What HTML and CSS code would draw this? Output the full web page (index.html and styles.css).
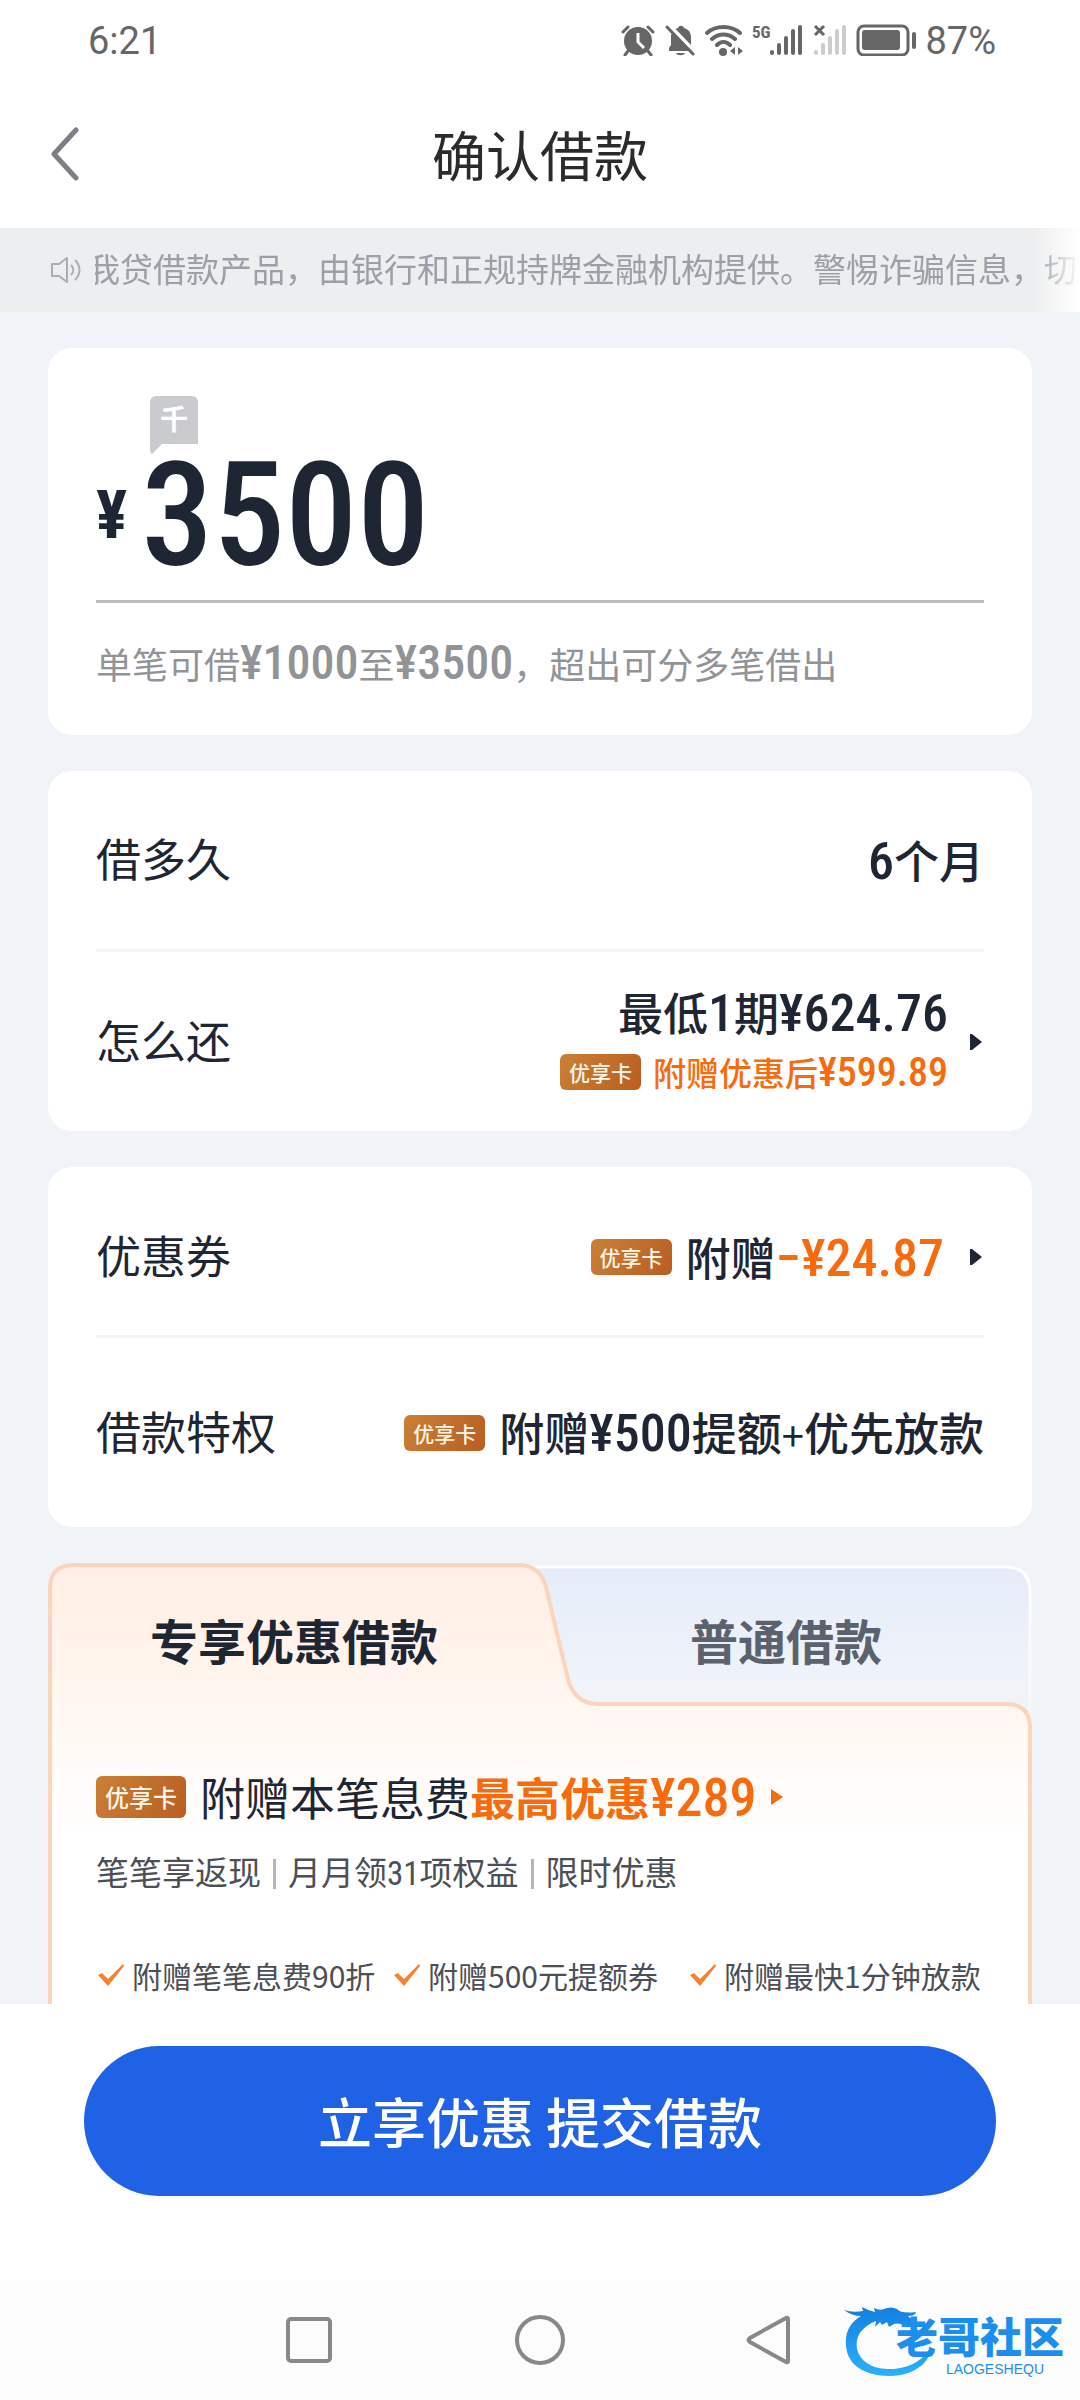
FILE: index.html
```html
<!DOCTYPE html>
<html lang="zh-CN">
<head>
<meta charset="utf-8">
<meta name="viewport" content="width=device-width, initial-scale=1">
<title>确认借款</title>
<link rel="stylesheet" href="styles.css">
</head>
<body>
<header>
  <div class="status">
    <span class="clock">6:21</span>
    <div class="status-icons">
      <svg width="34" height="32" viewBox="0 0 34 32" aria-hidden="true">
        <circle cx="17" cy="17" r="14" fill="#666"/>
        <path d="M2 8l5-5M32 8l-5-5M7 27l-3 4M27 27l3 4" stroke="#666" stroke-width="3" stroke-linecap="round"/>
        <path d="M17 9v9l6 6" fill="none" stroke="#fff" stroke-width="3"/>
      </svg>
      <svg width="32" height="32" viewBox="0 0 32 32" aria-hidden="true">
        <path d="M5 27v-3l2-3v-8c0-5 3-8 7-9 1-3 5-3 6 0 4 1 7 4 7 9v8l2 3v3z" fill="#666"/>
        <path d="M12 29h9c-1 3-8 3-9 0z" fill="#666"/>
        <path d="M5 1l26 27" stroke="#fff" stroke-width="4"/>
        <path d="M3 3l26 27" stroke="#666" stroke-width="3" stroke-linecap="round"/>
      </svg>
      <svg width="38" height="32" viewBox="0 0 38 32" aria-hidden="true">
        <path d="M2 9c9-8 24-8 33 0M7 15c7-6 16-6 23 0M12 21c4-4 9-4 13 0" fill="none" stroke="#666" stroke-width="4" stroke-linecap="round"/>
        <circle cx="18" cy="28" r="4" fill="#666"/>
        <path d="M30 23v8l-5-4zM33 23v8l5-4z" fill="#666"/>
      </svg>
      <div class="signal">
        <span class="net">5G</span>
        <svg width="34" height="32" viewBox="0 0 34 32" aria-hidden="true">
          <path d="M2 28v1M9 21v8M16 14v15M23 7v22M30 3v26" stroke="#666" stroke-width="4" stroke-linecap="round"/>
        </svg>
      </div>
      <svg width="34" height="32" viewBox="0 0 34 32" aria-hidden="true">
        <path d="M3 28v1M10 21v8M17 14v15M24 7v22M31 3v26" stroke="#ccc" stroke-width="4" stroke-linecap="round"/>
        <path d="M2 2l9 9M11 2l-9 9" stroke="#666" stroke-width="3"/>
      </svg>
      <svg class="battery" width="60" height="32" viewBox="0 0 60 32" aria-hidden="true">
        <rect x="2" y="2" width="50" height="29" rx="6" fill="none" stroke="#666" stroke-width="3"/>
        <rect x="6" y="6" width="38" height="20" rx="3" fill="#666"/>
        <rect x="56" y="8" width="4" height="17" rx="2" fill="#666"/>
      </svg>
      <span class="clock">87%</span>
    </div>
  </div>
  <div class="titlebar">
    <button class="back" aria-label="返回">
      <svg width="30" height="54" viewBox="0 0 30 54"><path d="M26 3L4 27l22 24" fill="none" stroke="#7d7e86" stroke-width="5" stroke-linecap="round" stroke-linejoin="round"/></svg>
    </button>
    <h1>确认借款</h1>
  </div>
  <div class="notice">
    <svg width="32" height="30" viewBox="0 0 32 30" aria-hidden="true"><path d="M2 9h7l8-6v24l-8-6H2zM21 10c3 3 3 7 0 10M25 5c6 6 6 14 0 20" fill="none" stroke="#a9adb3" stroke-width="2" stroke-linejoin="round"/></svg>
    <p>我贷借款产品，由银行和正规持牌金融机构提供。警惕诈骗信息，切</p>
  </div>
</header>

<main>
  <section class="card amount">
    <span class="unit">千</span>
    <div class="sum"><span class="yen">¥</span><span class="digits">3500</span></div>
    <p class="limits">单笔可借<b class="num">¥1000</b>至<b class="num">¥3500</b>，超出可分多笔借出</p>
  </section>

  <section class="card">
    <div class="row term">
      <span class="label">借多久</span>
      <span class="value"><span><span class="num">6</span>个月</span></span>
    </div>
    <div class="row plan">
      <span class="label">怎么还</span>
      <a class="value" href="#plan">
        <span class="stack">
          <span>最低<span class="num">1</span>期<span class="num">¥624.76</span></span>
          <span class="saving"><span class="tag">优享卡</span><span>附赠优惠后<span class="num">¥599.89</span></span></span>
        </span>
        <svg class="arrow" width="12" height="18" viewBox="0 0 12 18"><path d="M0 1h2l10 8-10 8H0z"/></svg>
      </a>
    </div>
  </section>

  <section class="card">
    <div class="row coupon">
      <span class="label">优惠券</span>
      <a class="value" href="#coupon">
        <span class="tag">优享卡</span>
        <span>附赠<span class="num hot">−¥24.87</span></span>
        <svg class="arrow" width="12" height="18" viewBox="0 0 12 18"><path d="M0 1h2l10 8-10 8H0z"/></svg>
      </a>
    </div>
    <div class="row perk">
      <span class="label">借款特权</span>
      <span class="value"><span class="tag">优享卡</span><span>附赠<span class="num">¥500</span>提额<small>+</small>优先放款</span></span>
    </div>
  </section>

  <section class="offer">
    <svg class="shape" viewBox="0 0 984 441" preserveAspectRatio="none" aria-hidden="true">
      <defs>
        <linearGradient id="warm" x1="0" y1="0" x2="0" y2="1">
          <stop offset="0" stop-color="#ffeee3"/><stop offset=".32" stop-color="#fff7f1"/><stop offset=".6" stop-color="#fff"/>
        </linearGradient>
        <linearGradient id="cool" x1="0" y1="0" x2="0" y2="1">
          <stop offset="0" stop-color="#e5ecf9"/><stop offset=".7" stop-color="#f0f4f9"/>
        </linearGradient>
        <linearGradient id="edge" x1="0" y1="0" x2="0" y2="1">
          <stop offset="0" stop-color="#fff"/><stop offset="1" stop-color="#fff" stop-opacity=".2"/>
        </linearGradient>
      </defs>
      <path d="M440 4H958Q982 4 982 30V170H440z" fill="url(#cool)" stroke="url(#edge)" stroke-width="3"/>
      <path d="M2 450V26Q2 2 26 2H470Q492 2 498 24L519 112Q525 141 550 141H958Q982 141 982 165V450z" fill="url(#warm)" stroke="#fad4bd" stroke-width="4"/>
    </svg>
    <div class="tabs" role="tablist">
      <button role="tab" aria-selected="true">专享优惠借款</button>
      <button role="tab" aria-selected="false">普通借款</button>
    </div>
    <div class="panel">
      <a class="headline" href="#benefits">
        <span class="tag large">优享卡</span>
        <span>附赠本笔息费<b class="hot">最高优惠<span class="num">¥289</span></b></span>
        <svg class="arrow hot" width="14" height="18" viewBox="0 0 14 18"><path d="M1 1l12 8-12 8z"/></svg>
      </a>
      <ul class="facts"><li>笔笔享返现</li><li>月月领31项权益</li><li>限时优惠</li></ul>
      <ul class="checks">
        <li><svg width="30" height="26" viewBox="0 0 30 26"><path d="M2 13l4-2 6 6L27 2l1 2-16 20z" fill="#f5812f"/></svg>附赠笔笔息费90折</li>
        <li><svg width="30" height="26" viewBox="0 0 30 26"><path d="M2 13l4-2 6 6L27 2l1 2-16 20z" fill="#f5812f"/></svg>附赠500元提额券</li>
        <li><svg width="30" height="26" viewBox="0 0 30 26"><path d="M2 13l4-2 6 6L27 2l1 2-16 20z" fill="#f5812f"/></svg>附赠最快1分钟放款</li>
      </ul>
    </div>
  </section>
</main>

<footer>
  <div class="action"><button class="submit">立享优惠 提交借款</button></div>
  <nav class="sysnav" aria-label="系统导航">
    <button aria-label="最近任务"><svg width="52" height="52" viewBox="0 0 52 52"><rect x="5" y="5" width="42" height="42" rx="3"/></svg></button>
    <button aria-label="主屏幕"><svg width="52" height="52" viewBox="0 0 52 52"><circle cx="26" cy="26" r="23"/></svg></button>
    <button aria-label="返回上一页"><svg width="52" height="52" viewBox="0 0 52 52"><path d="M41 4Q43 3 43 5V47Q43 49 41 48L5 28Q2 26 5 24z"/></svg></button>
    <div class="mark">
      <svg width="104" height="76" viewBox="0 0 104 76" aria-hidden="true">
        <defs><linearGradient id="sea" x1="0" y1="0" x2="0" y2="1"><stop offset="0" stop-color="#147fe0"/><stop offset="1" stop-color="#29b2fb"/></linearGradient></defs>
        <path d="M0 6Q9 9 19 7L18 3Q25 7 31 8L30 4Q36 7 40 5Q47 2 53 5Q57 10 72 8Q71 12 64 12L71 18Q67 22 60 18L64 23Q55 18 50 20L45 23L43 18L38 21L36 18L31 23L32 17C17 23 11 33 13 45C17 61 34 66 50 65C68 63 80 55 86 44C87 57 73 68 57 71C30 75 8 66 3 48C-1 31 5 19 17 12Q8 12 0 6z" fill="url(#sea)"/>
      </svg>
      <div class="mark-text"><span>老哥社区</span><small>LAOGESHEQU</small></div>
    </div>
  </nav>
</footer>
</body>
</html>
```
FILE: styles.css
```css
* { box-sizing: border-box; }
body {
  margin: 0;
  min-height: 100vh;
  display: flex;
  flex-direction: column;
  background: #f0f3f8;
  color: #1f2633;
  font-family: "Noto Sans CJK SC", sans-serif;
  font-size: 45px;
  line-height: 60px;
}
h1, p, ul { margin: 0; padding: 0; }
ul { list-style: none; }
a { color: inherit; text-decoration: none; }
button { border: 0; padding: 0; background: none; font: inherit; color: inherit; }
svg { display: block; flex: none; }

/* header */
header { background: #fff; }
.status {
  display: flex;
  justify-content: space-between;
  align-items: center;
  height: 80px;
  padding: 0 84px 0 88px;
  color: #666;
}
.clock { padding-top: 2px; font-family: Roboto, sans-serif; font-size: 38px; line-height: 40px; }
.status-icons { display: flex; align-items: center; gap: 9px; }
.signal { display: flex; align-items: flex-start; }
.net { font: 700 17px/16px "Roboto Condensed", "Liberation Sans", sans-serif; }
.titlebar {
  display: grid;
  grid-template-columns: 96px 1fr 96px;
  align-items: center;
  height: 148px;
}
.back { justify-self: end; padding-right: 16px; }
h1 { font-size: 54px; font-weight: 400; line-height: 72px; text-align: center; color: #2b2b2b; }
.notice {
  display: flex;
  align-items: center;
  gap: 13px;
  height: 84px;
  padding-left: 50px;
  background: linear-gradient(to right, #edeeef calc(100% - 48px), #fff);
  color: #9a9fa8;
  font-size: 33px;
}
.notice p {
  flex: 1;
  overflow: hidden;
  padding-bottom: 4px;
  white-space: nowrap;
  text-indent: -8px;
  mask-image: linear-gradient(to right, #000 calc(100% - 48px), transparent);
}

/* cards */
main {
  flex: 1;
  display: flex;
  flex-direction: column;
  gap: 36px;
  padding: 36px 48px 0;
}
.card { background: #fff; border-radius: 24px; padding: 0 48px; }
.num, .sum { font-family: "Roboto Condensed", "Noto Sans CJK SC", sans-serif; font-weight: 500; }
.num { font-size: 52px; line-height: 48px; }
.hot { color: #f76b0c; fill: #f76b0c; }
.amount { display: flex; flex-direction: column; padding: 48px 48px 42px; }
.unit {
  margin-left: 54px;
  width: 48px;
  height: 60px;
  background: #cacbce;
  color: #fff;
  font-size: 28px;
  font-weight: 700;
  line-height: 44px;
  text-align: center;
  border-radius: 6px;
  clip-path: polygon(0 0, 100% 0, 100% 80%, 25% 80%, 0 100%);
}
.sum {
  display: flex;
  align-items: center;
  gap: 14px;
  height: 144px;
  padding-bottom: 24px;
}
.yen { font-size: 66px; font-weight: 700; line-height: 66px; }
.digits { font-size: 144px; line-height: 120px; }
.limits { padding-top: 30px; border-top: 3px solid #bbb; font-size: 36px; line-height: 60px; color: #929397; }
.limits .num { font-size: 48px; line-height: 40px; }
.row {
  display: flex;
  justify-content: space-between;
  align-items: center;
}
.row + .row { border-top: 3px solid #f4f4f6; }
.label { padding-bottom: 4px; }
.term { min-height: 178px; }
.plan { min-height: 182px; }
.coupon { min-height: 168px; padding-top: 12px; }
.perk { min-height: 192px; }
.value { display: flex; align-items: center; gap: 14px; font-weight: 500; }
.value small { font-size: 40px; font-weight: 400; }
.stack { display: flex; flex-direction: column; align-items: flex-end; }
.saving { display: flex; align-items: center; gap: 12px; color: #f76b0c; font-size: 33px; }
.saving .num { font-size: 40px; line-height: 40px; }
.tag {
  padding: 0 9px;
  border-radius: 6px;
  background: linear-gradient(120deg, #ca8036, #b95e22);
  color: #fff6e8;
  font-size: 21px;
  font-weight: 500;
  line-height: 36px;
}
.tag.large { font-size: 24px; line-height: 42px; }
.arrow { margin: 0 2px 0 8px; fill: #1f2633; }
.coupon .arrow { margin-left: 12px; }
.arrow.hot { margin: 0; fill: #f76b0c; }

/* offer */
.offer { position: relative; flex: 1; display: flex; flex-direction: column; }
.shape { position: absolute; inset: 0; width: 100%; height: 100%; overflow: hidden; }
.tabs, .panel { position: relative; }
.tabs { display: grid; grid-template-columns: 1fr 1fr; height: 140px; padding-top: 12px; }
.tabs button { font-size: 48px; font-weight: 700; color: #5b616d; }
.tabs [aria-selected="true"] { color: #1f2633; }
.panel { padding: 64px 48px 0; }
.headline { display: flex; align-items: center; gap: 14px; }
.headline .num { font-size: 54px; }
.facts { display: flex; padding-top: 20px; font-family: "Roboto Condensed", "Noto Sans CJK SC", sans-serif; font-size: 33px; line-height: 54px; color: #4c4f56; }
.facts li { display: flex; align-items: center; }
.facts li + li::before { content: ""; width: 3px; height: 30px; margin: 0 12px; background: #b5b6ba; }
.checks { display: grid; grid-template-columns: repeat(3, 1fr); padding-top: 50px; font-size: 30px; line-height: 48px; color: #4c4f56; }
.checks li { display: flex; align-items: center; gap: 6px; white-space: nowrap; }

/* footer */
.action { display: flex; padding: 42px 84px 84px; background: #fff; }
.submit {
  flex: 1;
  height: 150px;
  border-radius: 75px;
  background: #2062e6;
  color: #fff;
  font-size: 54px;
  font-weight: 500;
}
.sysnav {
  position: relative;
  display: flex;
  justify-content: center;
  align-items: center;
  gap: 179px;
  height: 120px;
  background: #fcfcfc;
}
.sysnav button svg { fill: none; stroke: #888; stroke-width: 4; }
.mark { position: absolute; right: 16px; bottom: 20px; display: flex; color: #1c8fee; }
.mark-text { display: flex; flex-direction: column; align-items: flex-end; margin: 10px 0 0 -52px; font-weight: 900; font-size: 42px; line-height: 42px; }
.mark-text small { margin-top: 6px; padding-right: 20px; font: 14px/14px "Liberation Sans", sans-serif; }
```
